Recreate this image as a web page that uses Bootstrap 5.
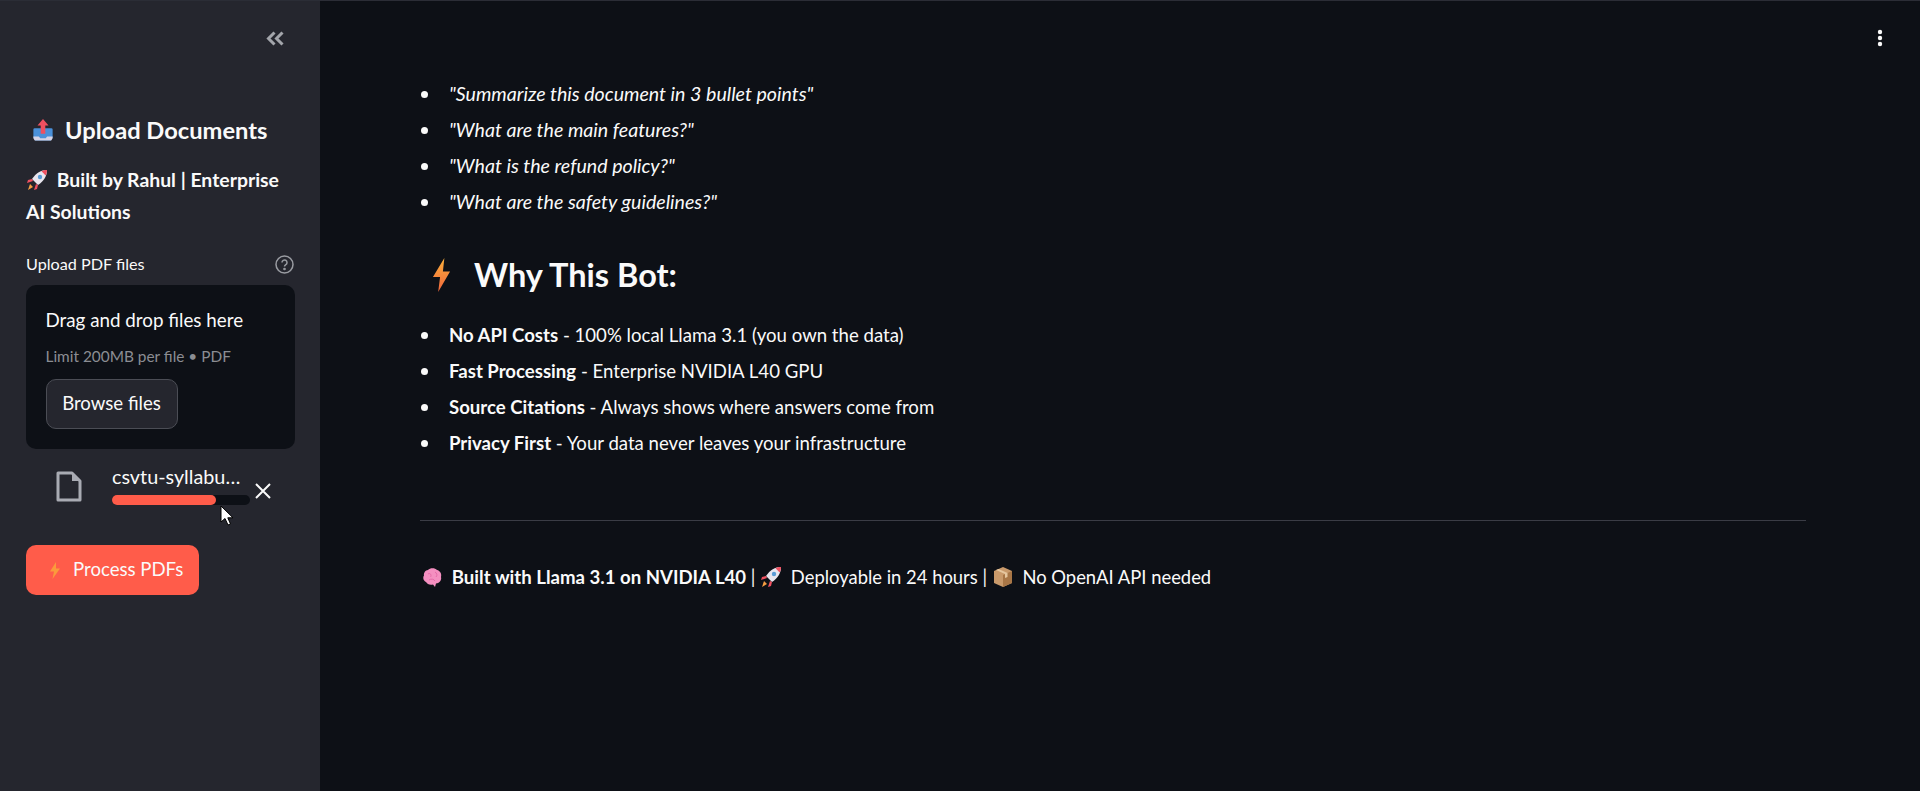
<!DOCTYPE html>
<html lang="en">
<head>
    <meta charset="UTF-8">
    <title>Upload Documents</title>
    <meta name="viewport" content="width=device-width, initial-scale=1">
    <link href="https://cdn.jsdelivr.net/npm/bootstrap@5.3.3/dist/css/bootstrap.min.css" rel="stylesheet">
    <style>
        html, body {
            height: 100%;
            overflow: hidden;
        }
        body {
            background: #0d1016;
            color: #fafafa;
            font-family: "Lato", "Noto Sans", sans-serif;
            font-size: 18.6px;
            border-top: 1px solid #2b2d36;
        }
        .app-shell { height: 100%; position: relative; }
        .side-panel {
            width: 320px;
            flex: none;
            background: #25262e;
            padding: 0 25px 0 26px;
        }
        .collapse-row { height: 76px; padding-right: 11px; padding-top: 30px; }
        .side-title { font-size: 23.7px; font-weight: 700; margin: 37px 0 0; padding-left: 6px; line-height: 32px; gap: 11px; }
        .side-sub { font-size: 19.4px; font-weight: 700; line-height: 32px; margin: 18px 0 0; }
        .upload-label { font-size: 16.2px; margin-top: 21px; height: 31px; padding-right: 1px; }
        .drop-box {
            background: #0d1016;
            border-radius: 10px;
            height: 164px;
            padding: 21px 20px 20px 19.500px;
            margin-top: 5px;
        }
        .drop-title { font-size: 18.8px; line-height: 28px; }
        .drop-hint { font-size: 15.4px; color: #8b8d93; line-height: 24px; margin-top: 10px; }
        .browse-btn {
            background: #25262e;
            border: 1px solid #4b4d55;
            color: #fafafa;
            border-radius: 10px;
            font-size: 18.6px;
            height: 50px;
            width: 132px;
            padding: 0;
            margin-top: 11px;
        }
        .file-row { margin-top: 15px; height: 40px; }
        .file-sheet { margin: 7px 30px 0 30px; flex: none; }
        .file-col { width: 138px; flex: none; }
        .file-name { font-size: 19.8px; line-height: 24px; white-space: nowrap; }
        .file-track { height: 10px; background: #0d1016; border-radius: 5px; margin-top: 7px; }
        .file-fill { height: 10px; width: 104px; background: #ff5c4a; border-radius: 5px; }
        .file-close { margin: 19px 0 0 5px; flex: none; }
        .process-btn {
            background: #ff5c4a;
            border: 0;
            color: #fafafa;
            border-radius: 10px;
            font-size: 18.6px;
            height: 50px;
            width: 173px;
            margin-top: 41px;
            padding: 0 0 0 23px;
            gap: 12px;
        }
        .main-panel { padding: 75px 114px 0 100px; min-width: 0; }
        .bullet-list { list-style: none; padding-left: 29px; margin: 0; }
        .bullet-list li { line-height: 36px; position: relative; }
        .bullet-list li::before {
            content: "";
            position: absolute;
            left: -28px;
            top: 14.500px;
            width: 7px;
            height: 7px;
            border-radius: 50%;
            background: #fafafa;
        }
        .bullet-list em { font-size: 19.6px; }
        .why-title { font-size: 32.500px; font-weight: 700; line-height: 44px; margin: 33px 0 0; padding-left: 12px; gap: 23px; }
        .why-list { margin-top: 20px; }
        .page-rule { border: 0; border-top: 1px solid #3a3c45; opacity: 1; margin: 59px 0 0; }
        .foot-note { margin: 38px 0 0; line-height: 36px; padding-left: 2px; font-size: 18.4px; }
        .foot-note strong { font-size: 18.6px; }
        .more-dots { position: absolute; top: 28px; right: 37px; }
        .cursor-mark { position: absolute; left: 220px; top: 504px; }
    </style>
</head>
<body>
<div class="app-shell d-flex">
    <aside class="side-panel">
        <div class="collapse-row d-flex justify-content-end">
            <svg width="18" height="15" viewBox="0 0 18 15" fill="none" stroke="#a3a5ab" stroke-width="3">
                <path d="M8.500 1.500 L2.500 7.500 L8.500 13.500"/><path d="M16.500 1.500 L10.500 7.500 L16.500 13.500"/>
            </svg>
        </div>
        <h2 class="side-title d-flex align-items-center">
            <svg width="22" height="26" viewBox="0 0 24 26">
                <path d="M3 11 h18 a1.5 1.5 0 0 1 1.5 1.5 V21 l-2 3.5 H3.500 L1.500 21 V12.500 A1.500 1.500 0 0 1 3 11z" fill="#4a90d9"/>
                <path d="M1.500 20 h6 l1.500 2 h6 l1.500 -2 h6 v2 l-1.500 2.500 H3 l-1.500 -2.500z" fill="#d5d3e6"/>
                <path d="M12 1 L18 8 H14.500 V17 H9.500 V8 H6z" fill="#ef5060"/>
            </svg>
            <span>Upload Documents</span>
        </h2>
        <p class="side-sub">
            <svg width="22" height="22" viewBox="0 0 22 22" class="align-text-bottom me-1">
                <path d="M21 1 C15 1 10 4 6 10 L12 16 C18 12 21 7 21 1z" fill="#e9e5ee"/>
                <path d="M21 1 C19 1 17 1.500 15.500 2.300 L19.700 6.500 C20.500 5 21 3 21 1z" fill="#ef5060"/>
                <circle cx="14" cy="8" r="2.200" fill="#5b9bd5"/>
                <path d="M6 10 L2 11 L1 14 L7 12z M12 16 L11 20 L8 21 L10 15z" fill="#ef5060"/>
                <path d="M4 15 L7 18 L2 21z" fill="#f59e42"/>
            </svg>
            Built by Rahul | Enterprise AI Solutions
        </p>
        <div class="upload-label d-flex justify-content-between align-items-center">
            <span>Upload PDF files</span>
            <svg width="19" height="19" viewBox="0 0 19 19" fill="none" stroke="#9a9ca2" stroke-width="1.500">
                <circle cx="9.500" cy="9.500" r="8.500"/>
                <path d="M7 7.500 a2.500 2.500 0 1 1 3.800 2.100 c-.9.6-1.300 1-1.300 2"/>
                <circle cx="9.500" cy="14" r=".6"/>
            </svg>
        </div>
        <div class="drop-box">
            <div class="drop-title">Drag and drop files here</div>
            <div class="drop-hint">Limit 200MB per file • PDF</div>
            <button type="button" class="btn browse-btn">Browse files</button>
        </div>
        <div class="file-row d-flex align-items-start">
            <svg class="file-sheet" width="26" height="31" viewBox="0 0 26 31" fill="none" stroke="#a9abb3" stroke-width="3">
                <path d="M2 2 H16 L24 10 V29 H2z" stroke-linejoin="round"/>
                <path d="M16 2 V10 H24" fill="#a9abb3" stroke="none"/>
            </svg>
            <div class="file-col">
                <div class="file-name">csvtu-syllabu…</div>
                <div class="file-track"><div class="file-fill"></div></div>
            </div>
            <svg class="file-close" width="16" height="16" viewBox="0 0 16 16" stroke="#fafafa" stroke-width="2">
                <path d="M1 1 L15 15 M15 1 L1 15"/>
            </svg>
        </div>
        <button type="button" class="btn process-btn d-flex align-items-center">
            <svg width="12" height="17" viewBox="0 0 12 17">
                <path d="M7 0 L1 9.500 H5 L3.500 17 L11 6.500 H7z" fill="#fb9a3c"/>
            </svg>
            <span>Process PDFs</span>
        </button>
    </aside>
    <main class="main-panel flex-grow-1">
        <ul class="bullet-list">
            <li><em>"Summarize this document in 3 bullet points"</em></li>
            <li><em>"What are the main features?"</em></li>
            <li><em>"What is the refund policy?"</em></li>
            <li><em>"What are the safety guidelines?"</em></li>
        </ul>
        <h2 class="why-title d-flex align-items-center">
            <svg width="19" height="34" viewBox="0 0 20 34" preserveAspectRatio="none">
                <defs>
                    <linearGradient id="boltFill" x1="0" y1="0" x2="0" y2="1">
                        <stop offset="0" stop-color="#fbb03b"/>
                        <stop offset="1" stop-color="#f0653c"/>
                    </linearGradient>
                </defs>
                <path d="M13 0 L1 19 H8.500 L6.500 34 L19 13.500 H11.500z" fill="url(#boltFill)"/>
            </svg>
            <span>Why This Bot:</span>
        </h2>
        <ul class="bullet-list why-list">
            <li><strong>No API Costs</strong> - 100% local Llama 3.1 (you own the data)</li>
            <li><strong>Fast Processing</strong> - Enterprise NVIDIA L40 GPU</li>
            <li><strong>Source Citations</strong> - Always shows where answers come from</li>
            <li><strong>Privacy First</strong> - Your data never leaves your infrastructure</li>
        </ul>
        <hr class="page-rule">
        <p class="foot-note">
            <svg width="21" height="21" viewBox="0 0 21 21" class="align-text-bottom me-1">
                <path d="M6 3 C8 0.500 13 0.500 15 3 C18 3.500 20 7 19 10 C20 13 17 16.500 14 16.500 L13 20 L11 17.500 C8 18.500 5 17 4 15 C1.500 14 0.500 10.500 2 8.500 C1.500 6 3.500 3 6 3z" fill="#f48fc0"/>
                <path d="M6 7 C8 5.500 10 8 8.500 10 M13 5 C15 6 15.500 8.500 14 10 M7 13 C9 11.500 12 12 13 14" fill="none" stroke="#e56ba8" stroke-width="1"/>
            </svg>
            <strong>Built with Llama 3.1 on NVIDIA L40</strong> |
            <svg width="22" height="22" viewBox="0 0 22 22" class="align-text-bottom me-1">
                <path d="M21 1 C15 1 10 4 6 10 L12 16 C18 12 21 7 21 1z" fill="#e9e5ee"/>
                <path d="M21 1 C19 1 17 1.500 15.500 2.300 L19.700 6.500 C20.500 5 21 3 21 1z" fill="#ef5060"/>
                <circle cx="14" cy="8" r="2.200" fill="#5b9bd5"/>
                <path d="M6 10 L2 11 L1 14 L7 12z M12 16 L11 20 L8 21 L10 15z" fill="#ef5060"/>
                <path d="M4 15 L7 18 L2 21z" fill="#f59e42"/>
            </svg>
            Deployable in 24 hours |
            <svg width="22" height="22" viewBox="0 0 22 22" class="align-text-bottom me-1">
                <path d="M11 1 L20 5 V17 L11 21 L2 17 V5z" fill="#c99a6b"/>
                <path d="M11 9 L20 5 V17 L11 21z" fill="#a87646"/>
                <path d="M6.500 3 L15.500 7 V11 L13 12 V8 L4 4z" fill="#e6c79f"/>
            </svg>
            No OpenAI API needed
        </p>
    </main>
    <svg class="more-dots" width="6" height="18" viewBox="0 0 6 18" fill="#fafafa">
        <circle cx="3" cy="3" r="2.200"/><circle cx="3" cy="9" r="2.200"/><circle cx="3" cy="15" r="2.200"/>
    </svg>
    <svg class="cursor-mark" width="15" height="22" viewBox="0 0 15 22">
        <path d="M1 1 V17 L5 13.500 L8 20 L10.500 19 L7.800 12.800 H13z" fill="#fff" stroke="#000" stroke-width="1"/>
    </svg>
</div>
<script src="https://cdn.jsdelivr.net/npm/bootstrap@5.3.3/dist/js/bootstrap.bundle.min.js"></script>
</body>
</html>
